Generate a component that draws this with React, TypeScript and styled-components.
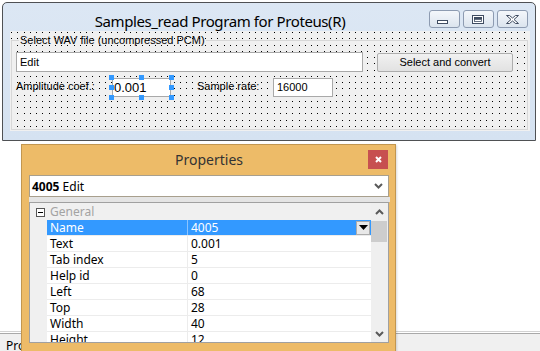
import React from 'react';
import styled, { createGlobalStyle } from 'styled-components';

const dotPositions = [0, 6, 13, 19];
const dotSvg = `<svg xmlns='http://www.w3.org/2000/svg' width='25' height='25'>${dotPositions
    .flatMap((y) => dotPositions.map((x) => `<rect x='${x}' y='${y}' width='1' height='1' fill='#000'/>`))
    .join('')}</svg>`;
const dotGrid = `url("data:image/svg+xml,${encodeURIComponent(dotSvg)}")`;

const GlobalStyle = createGlobalStyle`
    html, body {
        margin: 0;
        padding: 0;
        background: #ffffff;
    }
    body {
        width: 540px;
        height: 351px;
        overflow: hidden;
        font-family: 'Liberation Sans', Arial, sans-serif;
    }
`;

interface Property {
    name: string;
    value: string;
    selected?: boolean;
}

const properties: Property[] = [
    { name: 'Name', value: '4005', selected: true },
    { name: 'Text', value: '0.001' },
    { name: 'Tab index', value: '5' },
    { name: 'Help id', value: '0' },
    { name: 'Left', value: '68' },
    { name: 'Top', value: '28' },
    { name: 'Width', value: '40' },
    { name: 'Height', value: '12' },
];

const handleSpots: [number, number][] = [
    [0, 0], [30, 0], [60, 0],
    [0, 10], [60, 10],
    [0, 20], [30, 20], [60, 20],
];

const MinimizeIcon = () => (
    <svg width="29" height="16" viewBox="0 0 29 16">
        <rect x="7.5" y="9.5" width="10" height="3" fill="#ffffff" stroke="#3f4c61" />
    </svg>
);

const MaximizeIcon = () => (
    <svg width="29" height="16" viewBox="0 0 29 16">
        <rect x="8.5" y="4.5" width="11" height="8" fill="#ffffff" stroke="#3f4c61" />
        <rect x="10" y="6" width="8" height="2" fill="#3f4c61" />
        <rect x="10.5" y="8.5" width="7" height="2" fill="#ffffff" stroke="#3f4c61" strokeWidth="0.8" />
    </svg>
);

const CloseIcon = () => (
    <svg width="29" height="16" viewBox="0 0 29 16">
        <polygon
            points="8.5,4.5 11.5,4.5 14.5,7 17.5,4.5 20.5,4.5 16,8.5 20.5,12.5 17.5,12.5 14.5,10 11.5,12.5 8.5,12.5 13,8.5"
            fill="#ffffff"
            stroke="#3f4c61"
            strokeLinejoin="round"
        />
    </svg>
);

const Chevron = ({ up }: { up?: boolean }) => (
    <svg width="9" height="6" viewBox="0 0 9 6">
        <polyline
            points={up ? '1,5 4.5,1.5 8,5' : '1,1 4.5,4.5 8,1'}
            fill="none"
            stroke="#5a5a5a"
            strokeWidth="2"
        />
    </svg>
);

const App = () => (
    <Page>
        <GlobalStyle />
        <DesignerWindow>
            <TitleBar>
                <WindowTitle>Samples_read Program for Proteus(R)</WindowTitle>
                <CaptionButtons>
                    <CaptionButton><MinimizeIcon /></CaptionButton>
                    <CaptionButton><MaximizeIcon /></CaptionButton>
                    <CaptionButton><CloseIcon /></CaptionButton>
                </CaptionButtons>
            </TitleBar>
            <ClientArea>
                <GroupBox>
                    <Legend>Select WAV file (uncompressed PCM)</Legend>
                    <ControlRow $top={4}>
                        <EditBox $width={347} $height={20}>Edit</EditBox>
                        <PushButton>Select and convert</PushButton>
                    </ControlRow>
                    <ControlRow $top={3}>
                        <StaticLabel $width={93}>Amplitude coef.:</StaticLabel>
                        <SelectionFrame>
                            <EditBox $width={59} $height={19} $large>0.001</EditBox>
                            {handleSpots.map(([x, y]) => (
                                <Handle key={`${x}-${y}`} $x={x} $y={y} />
                            ))}
                        </SelectionFrame>
                        <StaticLabel $width={76} $gap={23}>Sample rate:</StaticLabel>
                        <EditBox $width={60} $height={19}>16000</EditBox>
                    </ControlRow>
                </GroupBox>
            </ClientArea>
        </DesignerWindow>
        <Filler />
        <BottomBar>
            <BottomTab>Pro</BottomTab>
        </BottomBar>

        <PropertiesWindow>
            <PanelTitleBar>
                <span />
                <PanelTitle>Properties</PanelTitle>
                <PanelClose>
                    <svg width="7" height="7" viewBox="0 0 7 7">
                        <path d="M1 1 L6 6 M6 1 L1 6" stroke="#ffffff" strokeWidth="2" />
                    </svg>
                </PanelClose>
            </PanelTitleBar>
            <ObjectCombo>
                <span><b>4005</b> Edit</span>
                <Chevron />
            </ObjectCombo>
            <ComboShade />
            <PropertyGrid>
                <Gutter>
                    <CollapseBox>
                        <svg width="9" height="9" viewBox="0 0 9 9">
                            <rect x="0.5" y="0.5" width="8" height="8" fill="#ffffff" stroke="#555555" />
                            <path d="M2 4.5 H7" stroke="#000000" />
                        </svg>
                    </CollapseBox>
                </Gutter>
                <GridBody>
                    <CategoryRow>General</CategoryRow>
                    {properties.map((p) => (
                        <PropRow key={p.name} $selected={p.selected}>
                            <PropName>{p.name}</PropName>
                            <PropDivider $selected={p.selected} />
                            <PropValue>
                                {p.value}
                                {p.selected && (
                                    <DropButton>
                                        <svg width="9" height="5" viewBox="0 0 9 5">
                                            <polygon points="0,0 9,0 4.5,5" fill="#000000" />
                                        </svg>
                                    </DropButton>
                                )}
                            </PropValue>
                        </PropRow>
                    ))}
                </GridBody>
                <ScrollBar>
                    <ScrollArrow><Chevron up /></ScrollArrow>
                    <ScrollThumb />
                    <ScrollTrack />
                    <ScrollArrow><Chevron /></ScrollArrow>
                </ScrollBar>
            </PropertyGrid>
        </PropertiesWindow>
    </Page>
);

const Page = styled.div`
    position: relative;
    display: flex;
    flex-direction: column;
    width: 540px;
    height: 351px;
    overflow: hidden;
    background: #ffffff;
`;

const DesignerWindow = styled.div`
    margin: 2px 0 0 2px;
    width: 534px;
    height: 139px;
    box-sizing: border-box;
    border: 1px solid #4f5154;
    border-radius: 5px 5px 0 0;
    background: linear-gradient(#dce7f4, #d5e2f1);
    display: flex;
    flex-direction: column;
    flex-shrink: 0;
`;

const TitleBar = styled.div`
    display: flex;
    height: 28px;
    padding-right: 7px;
`;

const WindowTitle = styled.div`
    flex: 1;
    text-align: center;
    padding: 9px 0 0 8px;
    font-family: 'Noto Sans', sans-serif;
    font-size: 15px;
    letter-spacing: -0.4px;
    line-height: 18px;
    color: #000000;
    white-space: nowrap;
`;

const CaptionButtons = styled.div`
    display: flex;
    gap: 3px;
    margin-top: 7px;
    height: 18px;
`;

const CaptionButton = styled.div`
    width: 31px;
    height: 18px;
    box-sizing: border-box;
    border: 1px solid #8d9bb1;
    border-radius: 3px;
    background: linear-gradient(#f4f7fb, #dbe4ee);
    display: flex;
    svg {
        display: block;
    }
`;

const ClientArea = styled.div`
    margin: 0 5px 9px 7px;
    height: 100px;
    background-color: #f0f0f0;
    background-image: ${dotGrid};
    background-position: 1px 1px;
    display: flex;
    flex-direction: column;
`;

const GroupBox = styled.fieldset`
    flex: 1;
    margin: 3px 2px 1px 1px;
    padding: 0;
    min-width: 0;
    border: 1px solid #d7d7d7;
    box-sizing: border-box;
`;

const Legend = styled.legend`
    margin-left: 7px;
    padding: 0 1px;
    font-size: 11px;
    line-height: 13px;
    color: #000000;
`;

const ControlRow = styled.div<{ $top: number }>`
    display: flex;
    align-items: center;
    margin-top: ${(p) => p.$top}px;
    padding-left: 4px;
    font-size: 11px;
    color: #000000;
`;

const EditBox = styled.div<{ $width: number; $height: number; $large?: boolean }>`
    width: ${(p) => p.$width}px;
    height: ${(p) => p.$height}px;
    box-sizing: border-box;
    border: 1px solid #a9a9a9;
    background: #ffffff;
    padding-left: ${(p) => (p.$large ? 1 : 3)}px;
    font-size: ${(p) => (p.$large ? 13 : 11)}px;
    line-height: ${(p) => p.$height - 2}px;
    color: #000000;
`;

const PushButton = styled.div`
    margin-left: 14px;
    width: 136px;
    height: 19px;
    box-sizing: border-box;
    border: 1px solid #adadad;
    border-radius: 2px;
    background: linear-gradient(#f1f1f1, #e2e2e2);
    text-align: center;
    line-height: 17px;
    margin-top: 2px;
`;

const StaticLabel = styled.div<{ $width: number; $gap?: number }>`
    width: ${(p) => p.$width}px;
    margin-left: ${(p) => p.$gap ?? 0}px;
    margin-bottom: 4px;
    white-space: nowrap;
`;

const SelectionFrame = styled.div`
    position: relative;
    width: 65px;
    height: 25px;
    padding: 3px 0 0 3px;
    box-sizing: border-box;
`;

const Handle = styled.span<{ $x: number; $y: number }>`
    position: absolute;
    left: ${(p) => p.$x}px;
    top: ${(p) => p.$y}px;
    width: 5px;
    height: 5px;
    background: #3399ff;
`;

const Filler = styled.div`
    flex: 1;
`;

const BottomBar = styled.div`
    height: 13px;
    flex-shrink: 0;
    border-top: 1px solid #d2d2d2;
    box-shadow: inset 0 1px 0 #ffffff, inset 0 2px 0 #a9a9a9;
    background: #f0f0f0;
    padding: 6px 0 0 6px;
    box-sizing: content-box;
`;

const BottomTab = styled.div`
    font-family: 'Noto Sans', sans-serif;
    font-size: 12px;
    line-height: 16px;
    color: #000000;
`;

const PropertiesWindow = styled.div`
    position: absolute;
    left: 21px;
    top: 144px;
    width: 375px;
    height: 220px;
    box-sizing: border-box;
    border: 1px solid #c2964f;
    background: #edbb68;
    padding: 0 6px 0 7px;
    box-shadow: 1px 1px 2px rgba(0, 0, 0, 0.15);
    display: flex;
    flex-direction: column;
    font-family: 'Noto Sans', sans-serif;
`;

const PanelTitleBar = styled.div`
    display: grid;
    grid-template-columns: 20px 1fr 20px;
    height: 30px;
`;

const PanelTitle = styled.div`
    text-align: center;
    padding-top: 5px;
    font-size: 14px;
    line-height: 20px;
    color: #333333;
`;

const PanelClose = styled.div`
    margin-top: 5px;
    margin-left: -1px;
    width: 20px;
    height: 19px;
    background: #c75050;
    display: flex;
    align-items: center;
    justify-content: center;
`;

const ObjectCombo = styled.div`
    height: 22px;
    box-sizing: border-box;
    border: 1px solid #a89f8d;
    background: #ffffff;
    display: flex;
    align-items: center;
    justify-content: space-between;
    padding: 0 5px 0 2px;
    font-size: 12px;
    color: #000000;
    b {
        font-weight: 700;
    }
`;

const ComboShade = styled.div`
    height: 5px;
    background: #e4e4e4;
    margin-right: -1px;
`;

const PropertyGrid = styled.div`
    display: flex;
    height: 141px;
    box-sizing: border-box;
    border: 1px solid #a0a0a0;
    background: #ffffff;
    font-size: 12px;
`;

const Gutter = styled.div`
    width: 17px;
    background: #f0f0f0;
`;

const CollapseBox = styled.div`
    padding: 5px 0 0 6px;
    svg {
        display: block;
    }
`;

const GridBody = styled.div`
    flex: 1;
    display: flex;
    flex-direction: column;
    overflow: hidden;
`;

const CategoryRow = styled.div`
    height: 17px;
    flex-shrink: 0;
    background: #f0f0f0;
    padding-left: 3px;
    line-height: 17px;
    color: #a3a3a3;
`;

const PropRow = styled.div<{ $selected?: boolean }>`
    display: grid;
    grid-template-columns: 140px 1px 1fr;
    height: 15px;
    flex-shrink: 0;
    border-bottom: 1px solid #ececec;
    background: ${(p) => (p.$selected ? '#3399ff' : '#ffffff')};
    color: ${(p) => (p.$selected ? '#ffffff' : '#000000')};
    line-height: 15px;
`;

const PropName = styled.div`
    padding-left: 3px;
`;

const PropDivider = styled.div<{ $selected?: boolean }>`
    background: ${(p) => (p.$selected ? '#8cc4ff' : '#ececec')};
`;

const PropValue = styled.div`
    display: flex;
    justify-content: space-between;
    align-items: center;
    padding: 0 1px 0 3px;
`;

const DropButton = styled.div`
    width: 14px;
    height: 14px;
    box-sizing: border-box;
    border: 1px solid #acacac;
    background: #e8e8e8;
    display: flex;
    align-items: center;
    justify-content: center;
`;

const ScrollBar = styled.div`
    width: 17px;
    background: #efefef;
    display: flex;
    flex-direction: column;
`;

const ScrollArrow = styled.div`
    height: 17px;
    display: flex;
    align-items: center;
    justify-content: center;
`;

const ScrollThumb = styled.div`
    height: 21px;
    margin: 1px 1px 0 0;
    background: #cdcdcd;
`;

const ScrollTrack = styled.div`
    flex: 1;
`;

export default App;
